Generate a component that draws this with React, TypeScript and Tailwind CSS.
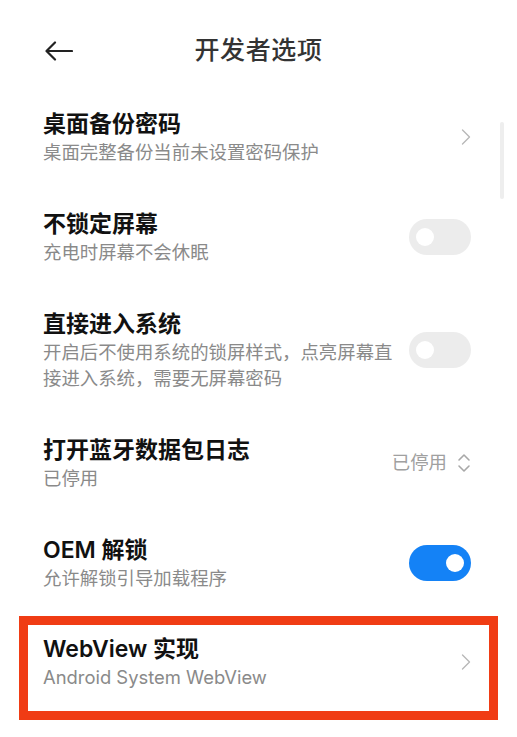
import React from 'react';

const FONT = { fontFamily: 'Inter, "Noto Sans CJK SC", sans-serif' };

function Chevron() {
  return (
    <svg width="10" height="16" viewBox="0 0 10 16" fill="none" className="shrink-0">
      <path d="M1.5 1 L8.5 8 L1.5 15" stroke="#b8b8b8" strokeWidth="1.4" strokeLinecap="round" strokeLinejoin="round" />
    </svg>
  );
}

function Toggle({ on }: { on?: boolean }) {
  return (
    <div
      className={`flex h-[36px] w-[62px] shrink-0 items-center rounded-full px-[7px] ${
        on ? 'justify-end bg-[#1482f6]' : 'justify-start bg-[#ececec]'
      }`}
    >
      <div className="h-[18px] w-[18px] rounded-full bg-white" />
    </div>
  );
}

function Row({
  title,
  subtitle,
  right,
  className = 'py-[22px] pl-[43px] pr-[46px]',
}: {
  title: string;
  subtitle: string;
  right: React.ReactNode;
  className?: string;
}) {
  return (
    <div className={`flex items-center justify-between ${className}`}>
      <div className="max-w-[356px]">
        <div className="text-[23px] font-semibold leading-[30px] text-[#111]">{title}</div>
        <div className="text-[18.4px] leading-[26px] text-[#8a8a8a]">{subtitle}</div>
      </div>
      {right}
    </div>
  );
}

export default function App() {
  return (
    <div className="relative h-[737px] w-[517px] overflow-hidden bg-white" style={FONT}>
      {/* Header */}
      <div className="relative flex h-[87px] items-start justify-center pt-[35px]">
        <svg
          width="28"
          height="20"
          viewBox="0 0 28 20"
          fill="none"
          className="absolute left-[45px] top-[41px]"
        >
          <path d="M27 10 H2 M10 1.5 L1.5 10 L10 18.5" stroke="#222" strokeWidth="2.2" strokeLinecap="round" strokeLinejoin="round" />
        </svg>
        <div className="text-[25px] font-medium leading-[30px] tracking-[0.6px] text-[#333]">开发者选项</div>
      </div>

      {/* Scrollbar */}
      <div className="absolute left-[500px] top-[122px] h-[77px] w-[4px] rounded-full bg-[#eeeeee]" />

      <Row title="桌面备份密码" subtitle="桌面完整备份当前未设置密码保护" right={<Chevron />} />
      <Row title="不锁定屏幕" subtitle="充电时屏幕不会休眠" right={<Toggle />} />
      <Row title="直接进入系统" subtitle="开启后不使用系统的锁屏样式，点亮屏幕直接进入系统，需要无屏幕密码" right={<Toggle />} />
      <Row
        title="打开蓝牙数据包日志"
        subtitle="已停用"
        right={
          <div className="flex items-center gap-[10px]">
            <span className="text-[18.4px] text-[#a0a0a0]">已停用</span>
            <svg width="14" height="20" viewBox="0 0 14 20" fill="none">
              <path d="M2 7 L7 2 L12 7 M2 13 L7 18 L12 13" stroke="#a8a8a8" strokeWidth="1.6" strokeLinecap="round" strokeLinejoin="round" />
            </svg>
          </div>
        }
      />
      <Row title="OEM 解锁" subtitle="允许解锁引导加载程序" right={<Toggle on />} />

      <div className="mx-[19px] mt-[3px] border-[9px] border-[#f03c14]">
        <Row
          title="WebView 实现"
          subtitle="Android System WebView"
          right={<Chevron />}
          className="pb-[21px] pl-[15px] pr-[18px] pt-[9px]"
        />
      </div>
    </div>
  );
}
